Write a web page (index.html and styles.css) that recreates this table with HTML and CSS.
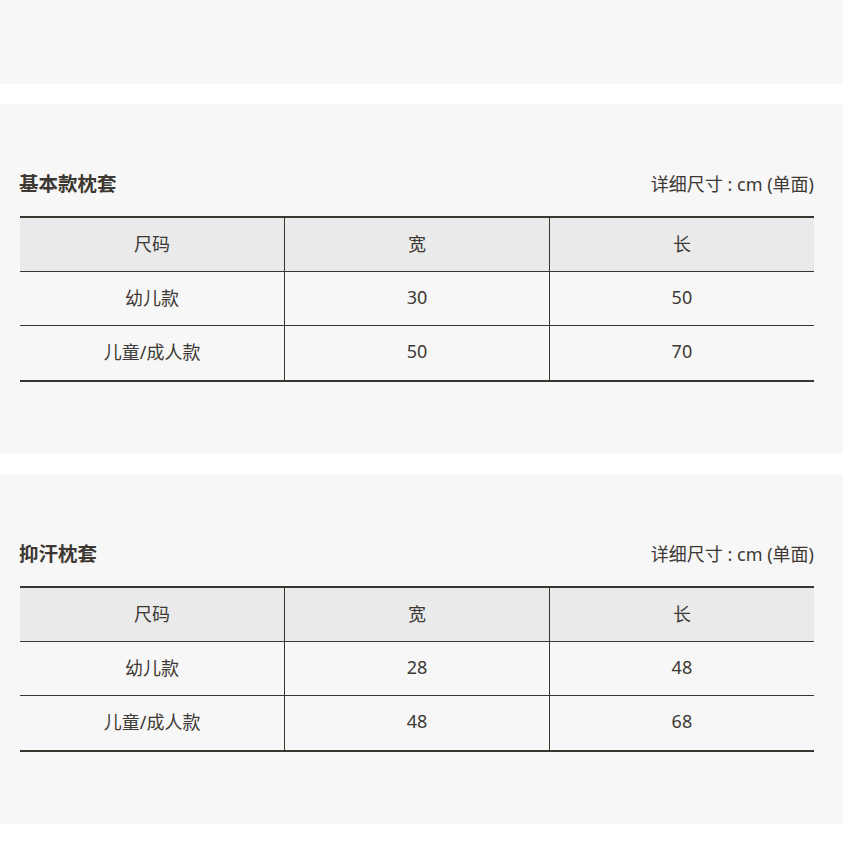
FILE: index.html
```html
<!DOCTYPE html>
<html lang="zh">
<head>
<meta charset="utf-8">
<title>尺寸表</title>
<link rel="stylesheet" href="styles.css">
</head>
<body>
<div class="panel panel-top"></div>

<section class="panel">
  <div class="head">
    <h2 class="title">基本款枕套</h2>
    <span class="note">详细尺寸 : cm (单面)</span>
  </div>
  <table class="size">
    <thead>
      <tr><th>尺码</th><th>宽</th><th>长</th></tr>
    </thead>
    <tbody>
      <tr><td>幼儿款</td><td>30</td><td>50</td></tr>
      <tr class="last"><td>儿童/成人款</td><td>50</td><td>70</td></tr>
    </tbody>
  </table>
</section>

<section class="panel">
  <div class="head">
    <h2 class="title">抑汗枕套</h2>
    <span class="note">详细尺寸 : cm (单面)</span>
  </div>
  <table class="size">
    <thead>
      <tr><th>尺码</th><th>宽</th><th>长</th></tr>
    </thead>
    <tbody>
      <tr><td>幼儿款</td><td>28</td><td>48</td></tr>
      <tr class="last"><td>儿童/成人款</td><td>48</td><td>68</td></tr>
    </tbody>
  </table>
</section>
</body>
</html>
```

FILE: styles.css
```css
html, body {
  margin: 0;
  padding: 0;
  background: #ffffff;
}
body {
  font-family: "Noto Sans", "Noto Sans CJK SC", sans-serif;
  color: #3d3935;
}
.panel {
  background: #f7f7f7;
  margin-bottom: 20px;
  padding: 66px 29px 72px 20px;
}
.panel-top {
  height: 84px;
  padding: 0;
}
.head {
  display: flex;
  justify-content: space-between;
  align-items: center;
  height: 28px;
  margin-bottom: 18px;
}
.title {
  margin: 0 0 0 -1px;
  font-size: 19.5px;
  font-weight: 700;
  line-height: 28px;
  color: #3d3832;
}
.note {
  font-size: 18px;
  line-height: 28px;
  color: #3d3935;
}
.size {
  width: 100%;
  border-collapse: collapse;
  table-layout: fixed;
  border-top: 2px solid #3b3530;
  border-bottom: 2px solid #3b3530;
}
.size th, .size td {
  height: 49px;
  padding: 0 0 4px;
  text-align: center;
  vertical-align: middle;
  font-size: 18px;
  font-weight: 400;
  color: #3d3935;
  border-bottom: 1px solid #3b3530;
  border-left: 1px solid #3b3530;
}
.size .last td {
  height: 50px;
}
.size th:first-child, .size td:first-child {
  border-left: none;
}
.size thead th {
  background: #eaeaea;
}
```
